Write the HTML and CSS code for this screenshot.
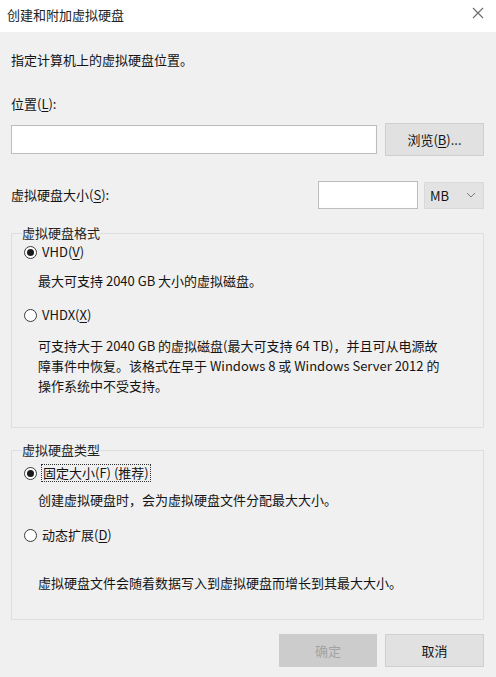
FILE: index.html
```html
<!DOCTYPE html>
<html lang="zh-CN">
<head>
<meta charset="utf-8">
<link rel="stylesheet" href="styles.css">
</head>
<body>
<div class="dialog">
  <div class="titlebar">
    <span class="title">创建和附加虚拟硬盘</span>
    <svg class="close" width="12" height="12" viewBox="0 0 12 12"><path d="M1 1 L11 11 M11 1 L1 11" stroke="#6a6a6a" stroke-width="1.1" fill="none"/></svg>
  </div>
  <div class="content">
    <div class="intro">指定计算机上的虚拟硬盘位置。</div>
    <div class="label loc-label">位置(<u>L</u>):</div>
    <div class="row loc-row">
      <div class="textbox loc-input"></div>
      <div class="btn browse">浏览(<u>B</u>)...</div>
    </div>
    <div class="row size-row">
      <div class="label size-label">虚拟硬盘大小(<u>S</u>):</div>
      <div class="textbox size-input"></div>
      <div class="select">
        <span>MB</span>
        <svg width="10" height="6" viewBox="0 0 10 6"><path d="M1 1 L5 5 L9 1" stroke="#7a7a7a" stroke-width="1" fill="none"/></svg>
      </div>
    </div>
    <fieldset class="group group-format">
      <legend>虚拟硬盘格式</legend>
      <div class="radio-row first"><span class="radio checked"></span><span class="rlabel">VHD(<u>V</u>)</span></div>
      <div class="desc d1">最大可支持 2040 GB 大小的虚拟磁盘。</div>
      <div class="radio-row r2"><span class="radio"></span><span class="rlabel">VHDX(<u>X</u>)</span></div>
      <div class="desc d2">可支持大于 2040 GB 的虚拟磁盘(最大可支持 64 TB)，并且可从电源故<br>障事件中恢复。该格式在早于 Windows 8 或 Windows Server 2012 的<br>操作系统中不受支持。</div>
    </fieldset>
    <fieldset class="group group-type">
      <legend>虚拟硬盘类型</legend>
      <div class="radio-row first2"><span class="radio checked"></span><span class="rlabel focus">固定大小(F) (推荐)</span></div>
      <div class="desc d3">创建虚拟硬盘时，会为虚拟硬盘文件分配最大大小。</div>
      <div class="radio-row r4"><span class="radio"></span><span class="rlabel">动态扩展(<u>D</u>)</span></div>
      <div class="desc d4">虚拟硬盘文件会随着数据写入到虚拟硬盘而增长到其最大大小。</div>
    </fieldset>
    <div class="row buttons">
      <div class="btn ok">确定</div>
      <div class="btn cancel">取消</div>
    </div>
  </div>
</div>
</body>
</html>
```

FILE: styles.css
```css
* { box-sizing: border-box; }
html, body { margin: 0; padding: 0; }
body {
  width: 496px;
  height: 677px;
  background: #f0f0f0;
  font-family: "Noto Sans CJK SC", "Noto Sans", sans-serif;
  font-size: 13px;
  color: #141414;
  overflow: hidden;
}
u { text-decoration: underline; text-underline-offset: 2px; }
.dialog { display: flex; flex-direction: column; height: 677px; }
.titlebar {
  height: 32px;
  background: #ffffff;
  display: flex;
  align-items: center;
  justify-content: space-between;
  padding: 0 10px 0 7px;
}
.title { font-size: 13px; color: #222; line-height: 18px; margin-top: -2px; }
.close { margin-top: -6px; margin-right: 2px; }
.content { padding: 0 12px 0 11px; display: flex; flex-direction: column; }
.intro { line-height: 20px; margin-top: 18px; }
.label { line-height: 20px; }
.loc-label { margin-top: 24px; }
.row { display: flex; align-items: center; }
.loc-row { margin-top: 9px; height: 33px; gap: 8px; }
.textbox {
  background: #fff;
  border: 1px solid #bdbdbd;
  box-shadow: inset 0 0 0 1px #fdfdfd;
}
.loc-input { width: 366px; height: 29px; }
.btn {
  display: flex; align-items: center; justify-content: center;
  background: #e1e1e1;
  border: 1px solid #cfcfcf;
  height: 33px;
}
.browse { width: 99px; }
.size-row { margin-top: 25px; height: 28px; gap: 6px; }
.size-label { flex: 1; }
.size-input { width: 100px; height: 28px; }
.select {
  width: 60px; height: 27px;
  background: #e3e3e3;
  border: 1px solid #d9d9d9;
  display: flex; align-items: center; justify-content: space-between;
  padding: 0 7px 0 5px;
}
.group {
  margin: 0;
  border: 1px solid #dedede;
  padding: 0 12px 0 10px;
  min-width: 0;
}
.group legend {
  padding: 0;
  line-height: 16px;
  color: #222;
}
.group-format { margin-top: 16px; padding-bottom: 31px; }
.group-type { margin-top: 14px; padding-bottom: 26px; }
.radio-row { display: flex; align-items: center; height: 18px; margin-left: 2px; }
.radio {
  width: 13px; height: 13px;
  border: 1px solid #3a3a3a;
  border-radius: 50%;
  background: #fff;
  display: flex; align-items: center; justify-content: center;
  flex: none;
}
.radio.checked::after {
  content: "";
  width: 7px; height: 7px;
  border-radius: 50%;
  background: #1a1a1a;
}
.rlabel { margin-left: 5px; line-height: 16px; }
.rlabel.focus { border: 1px dotted #333; padding: 0 1px; margin-left: 4px; }
.desc { line-height: 20px; padding-left: 16px; }
.first { margin-top: 2px; }
.d1 { margin-top: 10px; }
.r2 { margin-top: 15px; }
.d2 { margin-top: 12px; }
.first2 { margin-top: 6px; }
.d3 { margin-top: 8px; }
.r4 { margin-top: 16px; }
.d4 { margin-top: 29px; }
.buttons { margin-top: 14px; justify-content: flex-end; gap: 8px; }
.ok { width: 98px; background: #cccccc; border-color: #cccccc; color: #a3a3a3; }
.cancel { width: 99px; }
```
